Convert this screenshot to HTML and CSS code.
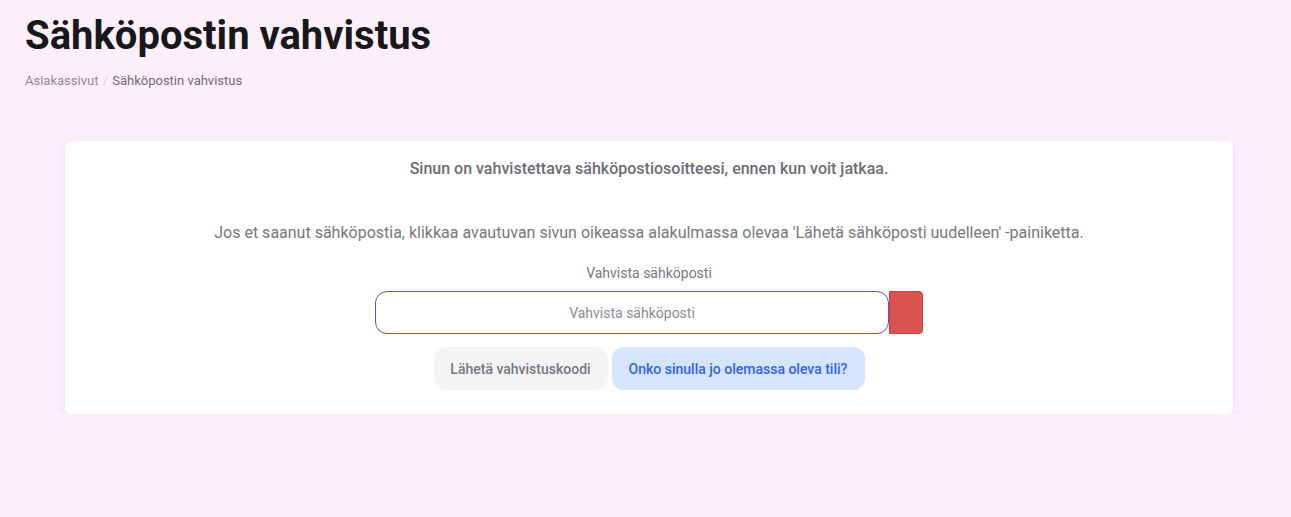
FILE: index.html
```html
<!DOCTYPE html>
<html>
<head>
    <title>Sähköpostin vahvistus</title>
    <link rel="stylesheet" href="styles.css">
</head>
<body>
    <div id="page-header">
        <h1>Sähköpostin vahvistus</h1>
        <div id="breadcrumb">
            <a href="#">Asiakassivut</a>
            <span class="sep">/</span>
            <span class="current">Sähköpostin vahvistus</span>
        </div>
    </div>
    <div id="card">
        <p class="notice">Sinun on vahvistettava sähköpostiosoitteesi, ennen kun voit jatkaa.</p>
        <p class="info">Jos et saanut sähköpostia, klikkaa avautuvan sivun oikeassa alakulmassa olevaa 'Lähetä sähköposti uudelleen' -painiketta.</p>
        <label for="email">Vahvista sähköposti</label>
        <div class="input-row">
            <input type="text" id="email" placeholder="Vahvista sähköposti">
            <button type="button" class="clear-btn"></button>
        </div>
        <div class="actions">
            <button type="button" class="send-btn">Lähetä vahvistuskoodi</button>
            <button type="button" class="account-btn">Onko sinulla jo olemassa oleva tili?</button>
        </div>
    </div>
</body>
</html>
```

FILE: styles.css
```css
body {
    margin: 0;
    background-color: #fdf0fb;
    font-family: Roboto, "Liberation Sans", sans-serif;
    color: #6c6c74;
}
#page-header {
    padding: 12px 25px 0;
}
#page-header h1 {
    margin: 0;
    font-size: 40px;
    font-weight: 700;
    color: #17171c;
    line-height: 48px;
}
#breadcrumb {
    margin-top: 13px;
    font-size: 13px;
    color: #8a8a92;
}
#breadcrumb a {
    color: #8a8a92;
    text-decoration: none;
}
#breadcrumb .sep {
    color: #d0d0d6;
    margin: 0 1px;
}
#breadcrumb .current {
    color: #6c6c74;
}
#card {
    margin: 53px 58px 0 65px;
    background-color: white;
    border-radius: 6px;
    box-shadow: 0 2px 14px rgba(180, 140, 180, 0.18);
    padding: 18px 20px 24px;
    display: flex;
    flex-direction: column;
    align-items: center;
}
#card .notice {
    margin: 0;
    font-size: 16px;
    font-weight: 500;
    line-height: 20px;
    color: #6c6c74;
}
#card .info {
    margin: 44px 0 0;
    font-size: 16px;
    line-height: 20px;
    color: #77777f;
}
#card label {
    margin-top: 20px;
    font-size: 14px;
    line-height: 20px;
    color: #77777f;
}
#card .input-row {
    display: flex;
    margin-top: 8px;
}
#card .input-row input {
    width: 514px;
    height: 43px;
    box-sizing: border-box;
    border: 1px solid #7446d0;
    border-radius: 12px;
    text-align: center;
    font-family: inherit;
    font-size: 14px;
    color: #333;
    outline: none;
}
#card .input-row input::placeholder {
    color: #8a8a92;
}
#card .clear-btn {
    width: 34px;
    height: 43px;
    background-color: #d9534f;
    border: 1px solid #cc4440;
    border-radius: 0 4px 4px 0;
}
#card .actions {
    display: flex;
    gap: 4px;
    margin-top: 13px;
}
#card .actions button {
    height: 43px;
    border: none;
    border-radius: 12px;
    font-family: inherit;
    font-size: 14px;
    font-weight: 500;
    cursor: pointer;
}
#card .send-btn {
    width: 174px;
    background-color: #f4f4f6;
    color: #77777f;
}
#card .account-btn {
    width: 253px;
    background-color: #d6e4ff;
    color: #2f63f0;
}
```
